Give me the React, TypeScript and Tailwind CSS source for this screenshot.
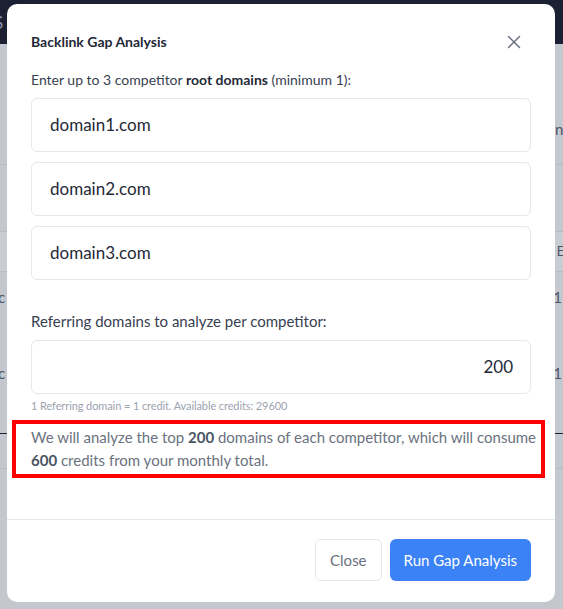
import { X } from "lucide-react";

const font = { fontFamily: 'Lato, "Open Sans", sans-serif' };

function DomainInput({ value }: { value: string }) {
  return (
    <div className="h-[54px] rounded-md border border-[#e5e7eb] bg-white px-[18px] flex items-center text-[17px] text-[#1f2937]">
      {value}
    </div>
  );
}

export default function App() {
  return (
    <div className="relative h-[609px] w-[563px] overflow-hidden bg-[#c4c7ce]" style={font}>
      {/* dimmed page behind the dialog */}
      <div className="h-[44px] bg-[#1c2033] flex items-start pt-[10px] text-[#8a93b0] text-[17px]">
        <span className="-ml-[6px]">S</span>
      </div>
      <div className="h-[121px] border-b border-[#b8bbc3] flex items-start justify-between pt-[74px] text-[15px] text-[#4b5563]">
        <span className="-ml-[8px]">a</span>
        <span className="-mr-[8px]">nk</span>
      </div>
      <div className="h-[67px] border-b border-[#b8bbc3]" />
      <div className="h-[40px] bg-[#c9ccd3] border-b border-[#b8bbc3] flex items-center justify-end text-[13px] text-[#4b5563]">
        <span className="-mr-[10px]">EA</span>
      </div>
      <div className="h-[76px] flex items-start justify-between pt-[14px] text-[15px] text-[#4b5563]">
        <span className="-ml-[10px]">ec</span>
        <span className="mr-[1px]">1</span>
      </div>
      <div className="h-[86px] border-b border-[#1c2033] flex items-start justify-between pt-[14px] text-[15px] text-[#4b5563]">
        <span className="-ml-[10px]">ec</span>
        <span className="mr-[1px]">1</span>
      </div>
      <div className="h-[35px] border-b border-[#b8bbc3]" />

      {/* dialog */}
      <div className="absolute left-[7px] top-[4px] w-[548px] h-[598px] rounded-[10px] bg-white flex flex-col">
        <div className="flex items-center justify-between pl-[24px] pr-[30px] pt-[27px] pb-[16px]">
          <h2 className="text-[14px] font-bold text-[#1f2937] leading-[20px]">Backlink Gap Analysis</h2>
          <X className="h-[22px] w-[22px] text-[#6b7280]" strokeWidth={1.6} />
        </div>
        <div className="px-[24px] flex-1">
          <p className="text-[14px] text-[#374151] leading-[22px] mb-[7px]">
            Enter up to 3 competitor <span className="font-bold text-[#1f2937]">root domains</span> (minimum 1):
          </p>
          <div className="flex flex-col gap-[10px]">
            <DomainInput value="domain1.com" />
            <DomainInput value="domain2.com" />
            <DomainInput value="domain3.com" />
          </div>
          <p className="text-[15px] text-[#374151] leading-[22px] mt-[30px] mb-[8px]">
            Referring domains to analyze per competitor:
          </p>
          <div className="h-[54px] rounded-md border border-[#e5e7eb] bg-white px-[17px] flex items-center justify-end text-[17px] text-[#1f2937]">
            200
          </div>
          <p className="text-[11px] tracking-[-0.1px] text-[#9ca3af] leading-[16px] mt-[4px]">
            1 Referring domain = 1 credit. Available credits: 29600
          </p>
          <div className="-ml-[19px] -mr-[14px] mt-[6px] border-[4px] border-[#ff0000] pl-[15px] pr-[4px] py-[2px] text-[15px] leading-[23px] text-[#6b7280]">
            We will analyze the top <span className="font-bold text-[#4b5563]">200</span> domains of each competitor, which will consume{" "}
            <span className="font-bold text-[#4b5563]">600</span> credits from your monthly total.
          </div>
        </div>
        <div className="border-t border-[#e5e7eb] h-[83px] flex items-center justify-end gap-[8px] px-[24px] pb-[2px]">
          <button className="h-[42px] px-[14px] rounded-md border border-[#e5e7eb] bg-white text-[15px] text-[#6b7280]">
            Close
          </button>
          <button className="h-[42px] px-[14px] rounded-md bg-[#3b82f6] text-[15px] text-white">
            Run Gap Analysis
          </button>
        </div>
      </div>
    </div>
  );
}
